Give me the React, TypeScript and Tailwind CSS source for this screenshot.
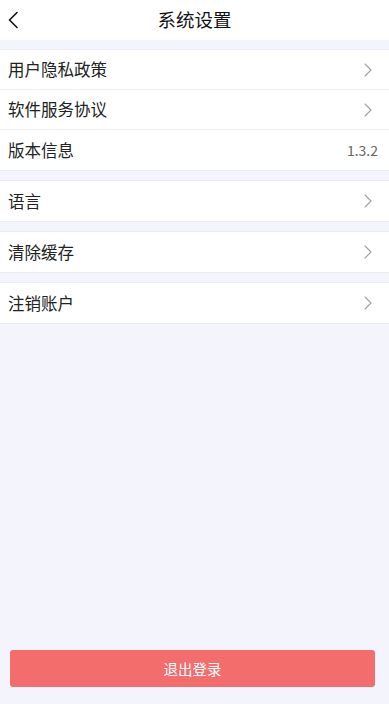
import { ReactNode } from "react";

const font = { fontFamily: "'Noto Sans CJK SC', 'Noto Sans', sans-serif" };

function Chevron() {
  return (
    <svg width="10" height="16" viewBox="0 0 10 16" fill="none" className="text-[#a0a0a0]">
      <path d="M2 2l6 6-6 6" stroke="currentColor" strokeWidth="1.1" strokeLinecap="round" strokeLinejoin="round" />
    </svg>
  );
}

function Row({ label, right, last }: { label: string; right?: ReactNode; last?: boolean }) {
  return (
    <div
      className={`flex h-10 items-center justify-between bg-white pl-2 pr-[16px] ${last ? "" : "border-b border-[#eeeeee]"}`}
    >
      <span className="text-[16.5px] text-[#222]">{label}</span>
      {right ?? <Chevron />}
    </div>
  );
}

function Group({ children }: { children: ReactNode }) {
  return <div className="border-y border-[#ebebf3] bg-white">{children}</div>;
}

export default function App() {
  return (
    <div className="flex min-h-[704px] flex-col bg-[#f4f4fc]" style={font}>
      {/* Header */}
      <div className="relative flex h-10 items-center justify-center bg-white">
        <svg width="12" height="18" viewBox="0 0 12 18" fill="none" className="absolute left-[7px] top-[11px]">
          <path d="M10 1.5L2.5 9l7.5 7.5" stroke="#111" strokeWidth="1.6" strokeLinecap="round" strokeLinejoin="round" />
        </svg>
        <span className="text-[18.5px] text-[#111]">系统设置</span>
      </div>

      <div className="mt-[9px] flex flex-col gap-[9px]">
        <Group>
          <Row label="用户隐私政策" />
          <Row label="软件服务协议" />
          <Row
            label="版本信息"
            right={<span className="-mr-[5px] text-[14px] text-[#666]">1.3.2</span>}
            last
          />
        </Group>
        <Group>
          <Row label="语言" last />
        </Group>
        <Group>
          <Row label="清除缓存" last />
        </Group>
        <Group>
          <Row label="注销账户" last />
        </Group>
      </div>

      <div className="mt-auto px-[10px] pb-[17px]">
        <button className="flex h-[37px] w-[365px] items-center justify-center rounded-[3px] bg-[#f46d6d] text-[14.5px] text-white">
          退出登录
        </button>
      </div>
    </div>
  );
}
